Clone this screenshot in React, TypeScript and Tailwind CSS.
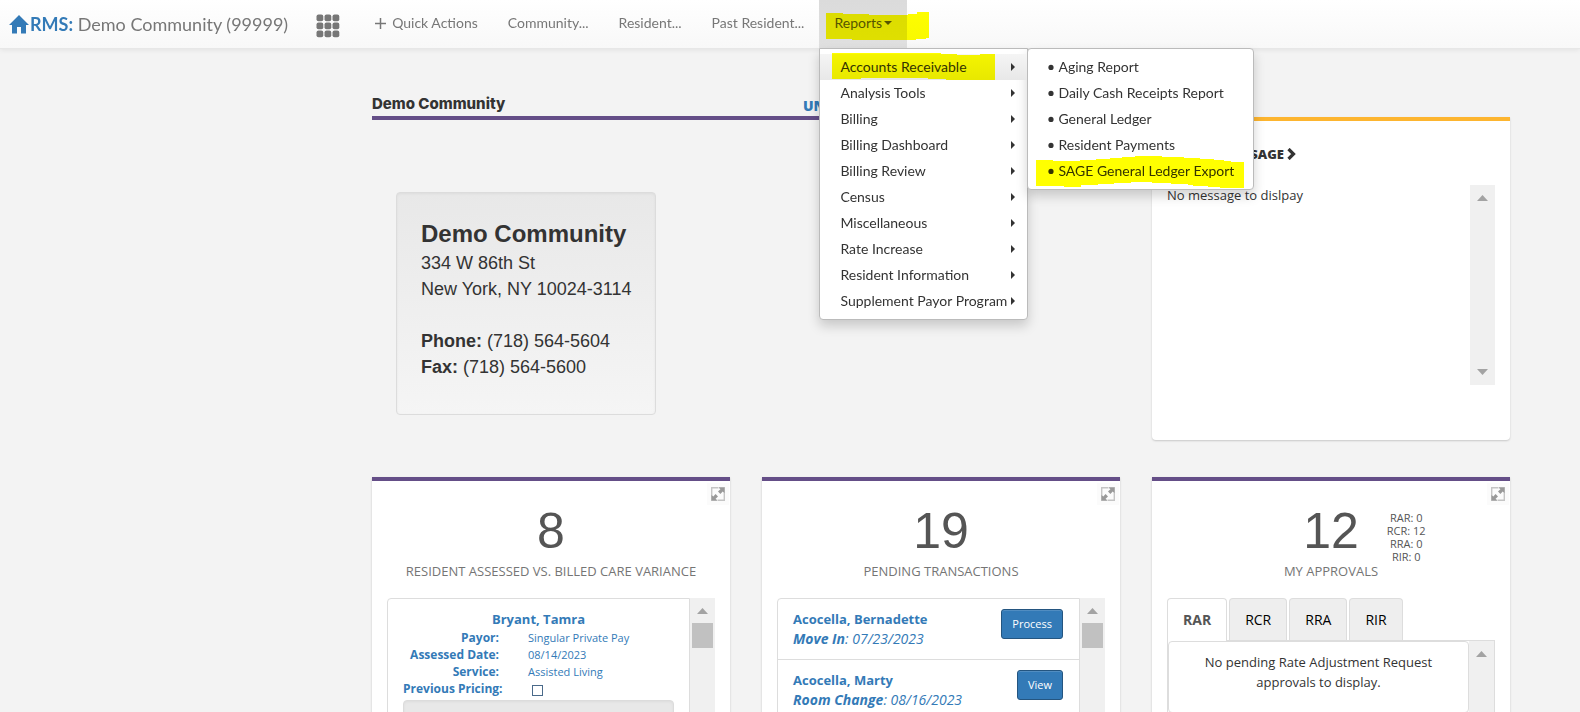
import type { ReactNode } from 'react';

const reportMenu = [
  'Accounts Receivable',
  'Analysis Tools',
  'Billing',
  'Billing Dashboard',
  'Billing Review',
  'Census',
  'Miscellaneous',
  'Rate Increase',
  'Resident Information',
  'Supplement Payor Program',
];

const receivableReports = [
  'Aging Report',
  'Daily Cash Receipts Report',
  'General Ledger',
  'Resident Payments',
  'SAGE General Ledger Export',
];

const transactions = [
  { name: 'Acocella, Bernadette', type: 'Move In', date: '07/23/2023', action: 'Process' },
  { name: 'Acocella, Marty', type: 'Room Change', date: '08/16/2023', action: 'View' },
];

const approvals = [
  { code: 'RAR', count: 0 },
  { code: 'RCR', count: 12 },
  { code: 'RRA', count: 0 },
  { code: 'RIR', count: 0 },
];

function HomeIcon() {
  return (
    <svg viewBox="0 0 20 19" className="w-5 h-[19px] shrink-0" fill="#337ab7" aria-hidden="true">
      <path d="M10 0L20 10H17V18.5H12V12H8V18.5H3V10H0Z" />
    </svg>
  );
}

function GridIcon() {
  return (
    <svg viewBox="0 0 24 24" className="size-6" fill="#777" aria-hidden="true">
      {[0, 8, 16].map((y) =>
        [0, 8, 16].map((x) => <rect key={`${x}-${y}`} x={x + 0.5} y={y + 0.5} width="6.8" height="6.8" rx="2" />)
      )}
    </svg>
  );
}

function ExpandIcon() {
  return (
    <svg viewBox="0 0 14 14" className="size-[14px]" fill="none" aria-hidden="true">
      <path d="M7.5 .7H.7V13.3H6M6.5 13.3H13.3V.7H8" stroke="#c4c4c4" strokeWidth="1.4" />
      <path d="M8 .5H13.5V6L11.7 4.6L9.4 7L7 4.6L9.4 2.3Z" fill="#999" />
      <path d="M6 13.5H.5V8L2.3 9.4L4.6 7L7 9.4L4.6 11.7Z" fill="#999" />
    </svg>
  );
}

function ScrollTrack({ thumb, down }: { thumb?: boolean; down?: boolean }) {
  return (
    <div className="w-[25px] shrink-0 bg-[#f0f0f0] flex flex-col items-center">
      <svg viewBox="0 0 11 6" className="w-[11px] h-1.5 mt-2.5 shrink-0" fill="#a3a3a3" aria-hidden="true">
        <path d="M5.5 0L11 6H0Z" />
      </svg>
      {thumb && <div className="w-[21px] h-[25px] mt-[9px] bg-[#c1c1c1]" />}
      {down && (
        <svg viewBox="0 0 11 6" className="w-[11px] h-1.5 mt-auto mb-2.5 shrink-0" fill="#a3a3a3" aria-hidden="true">
          <path d="M5.5 6L11 0H0Z" />
        </svg>
      )}
    </div>
  );
}

function Marker({ className, viewBox, d }: { className: string; viewBox: string; d: string }) {
  return (
    <svg viewBox={viewBox} className={`absolute mix-blend-multiply pointer-events-none ${className}`} aria-hidden="true">
      <path d={d} fill="#ff0" />
    </svg>
  );
}

function StatCard({ count, label, side, children }: { count: number; label: string; side?: ReactNode; children: ReactNode }) {
  return (
    <section className="relative bg-white border-t-4 border-[#644e87] shadow-[0_1px_2px_rgba(0,0,0,0.18)] px-[15px] h-[300px]">
      <button type="button" aria-label="Expand" className="absolute top-0.5 right-px p-1 bg-[#fbfbfb]">
        <ExpandIcon />
      </button>
      <div className="grid grid-cols-[1fr_auto_1fr] h-[78px] pt-6">
        <span />
        <span className="font-['Liberation_Sans',sans-serif] text-[50px] leading-[52px] text-[#555]">{count}</span>
        <div className="pl-7 pt-1.5">{side}</div>
      </div>
      <h2 className="text-center text-[13px] leading-5 mt-0.5 font-medium text-[#757575]">{label}</h2>
      <div className="mt-[17px]">{children}</div>
    </section>
  );
}

function NavBar() {
  return (
    <header className="relative z-10 flex h-[49px] bg-linear-to-b from-white to-[#f8f8f8] border-b border-[#e7e7e7] shadow-[0_1px_5px_rgba(0,0,0,0.075)] font-[Lato,sans-serif] text-sm leading-5 text-[#777]">
      <a href="#" className="flex items-center pl-[9px] gap-px text-lg">
        <HomeIcon />
        <span>
          <b className="text-[#337ab7]">RMS:</b> Demo Community (99999)
        </span>
      </a>
      <button type="button" aria-label="Apps" className="pl-7 pt-1 pr-5">
        <GridIcon />
      </button>
      <nav className="flex">
        <a href="#" className="flex items-center gap-1.5 px-[15px] pb-0.5">
          <svg viewBox="0 0 11 11" className="size-[11px]" stroke="#777" strokeWidth="1.5" aria-hidden="true">
            <path d="M5.5 0V11M0 5.5H11" />
          </svg>
          Quick Actions
        </a>
        <a href="#" className="flex items-center px-[15px] pb-0.5">Community...</a>
        <a href="#" className="flex items-center px-[15px] pb-0.5">Resident...</a>
        <a href="#" className="flex items-center px-[15px] pb-0.5">Past Resident...</a>
        <div className="relative flex">
          <a
            href="#"
            aria-expanded="true"
            className="flex items-center gap-0.5 px-[15px] pb-0.5 text-[#555] bg-linear-to-b from-[#dbdbdb] to-[#e0e0e0]"
          >
            Reports
            <svg viewBox="0 0 8 4" className="w-2 h-1" fill="#555" aria-hidden="true">
              <path d="M0 0H8L4 4Z" />
            </svg>
          </a>
          <Marker
            className="left-[7px] top-3 w-[103px] h-7"
            viewBox="0 0 103 28"
            d="M0 1H17V2H43V3H82V2H91V0H103V26H100V27H90V28H26V27H0Z"
          />
          <ReportMenu />
        </div>
      </nav>
    </header>
  );
}

function ReportMenu() {
  return (
    <div className="absolute left-0 top-12 flex items-start text-[#333] whitespace-nowrap">
      <ul className="w-[209px] py-[5px] bg-white border border-[#bbb] rounded-b shadow-[0_6px_12px_rgba(0,0,0,0.175)]">
        {reportMenu.map((item, i) => (
          <li key={item} className={`relative ${i === 0 ? 'bg-linear-to-b from-[#f5f5f5] to-[#e8e8e8]' : ''}`}>
            <a href="#" className="flex items-center justify-between pl-5 pr-3 py-[3px]">
              {item}
              <svg viewBox="0 0 4 8" className="w-1 h-2" fill="#333" aria-hidden="true">
                <path d="M0 0L4 4L0 8Z" />
              </svg>
            </a>
            {i === 0 && (
              <Marker
                className="left-3 -top-px w-[163px] h-[27px]"
                viewBox="0 0 163 27"
                d="M0 0H109V1H125V2H148V1H163V27H114V26H96V25H29V26H0Z"
              />
            )}
          </li>
        ))}
      </ul>
      <ul className="w-[227px] -ml-px py-[5px] bg-white border border-[#bbb] rounded shadow-[0_6px_12px_rgba(0,0,0,0.175)]">
        {receivableReports.map((item) => (
          <li key={item} className="relative">
            <a href="#" className="flex items-center gap-1 pl-5 py-[3px]">
              <svg viewBox="0 0 6 6" className="size-1.5" fill="#333" aria-hidden="true">
                <circle cx="3" cy="3.4" r="2.6" />
              </svg>
              {item}
            </a>
            {item === 'SAGE General Ledger Export' && (
              <Marker
                className="left-2 -top-0.5 w-[208px] h-8"
                viewBox="0 0 208 32"
                d="M0 4H17V5H44V4H60V3H74V2H86V1H99V0H126V1H148V2H164V3H178V4H188V5H195V6H208V32H184V31H172V30H157V29H152V28H135V27H116V26H95V27H78V28H62V29H45V31H28V30H0Z"
              />
            )}
          </li>
        ))}
      </ul>
    </div>
  );
}

function VarianceList() {
  return (
    <div className="flex h-40">
      <div className="flex-1 border border-[#ddd] rounded-tl px-[15px] pt-2.5 text-xs leading-[17px] text-[#337ab7]">
        <a href="#" className="block text-center text-[13px] leading-5 font-bold">Bryant, Tamra</a>
        <dl className="grid grid-cols-[96px_1fr] gap-x-[29px]">
          <dt className="text-right font-bold">Payor:</dt>
          <dd className="text-[11px]">Singular Private Pay</dd>
          <dt className="text-right font-bold">Assessed Date:</dt>
          <dd className="text-[11px]">08/14/2023</dd>
          <dt className="text-right font-bold">Service:</dt>
          <dd className="text-[11px]">Assisted Living</dd>
          <dt className="text-right font-bold whitespace-nowrap">
            <label htmlFor="previous-pricing">Previous Pricing:</label>
          </dt>
          <dd className="flex items-center pl-1 pt-1">
            <input
              id="previous-pricing"
              type="checkbox"
              className="appearance-none size-[11px] border border-[#4a6a8a] bg-white checked:bg-[#337ab7]"
            />
          </dd>
        </dl>
        <div className="h-12 mt-[3px] rounded border border-[#dcdcdc] bg-[#e8e8e8] shadow-[inset_0_1px_3px_rgba(0,0,0,0.05)]" />
      </div>
      <ScrollTrack thumb />
    </div>
  );
}

function TransactionList() {
  return (
    <div className="flex h-40">
      <ul className="flex-1 border border-[#ddd] rounded-tl text-sm leading-5 text-[#337ab7]">
        {transactions.map((t) => (
          <li key={t.name} className="flex items-start justify-between h-[61px] pt-2.5 pl-[15px] pr-4 border-b border-[#ddd]">
            <a href="#">
              <b className="block text-[13px] leading-5">{t.name}</b>
              <i>
                <b>{t.type}</b>: {t.date}
              </i>
            </a>
            <button
              type="button"
              className="h-[30px] px-2.5 rounded-[3px] border border-[#245580] bg-[#337ab7] text-[11px] font-medium text-white shadow-[inset_0_1px_0_rgba(255,255,255,0.15)]"
            >
              {t.action}
            </button>
          </li>
        ))}
      </ul>
      <ScrollTrack thumb />
    </div>
  );
}

function ApprovalTabs() {
  return (
    <div>
      <div role="tablist" className="flex gap-0.5 text-sm leading-5">
        {approvals.map(({ code }, i) => (
          <button
            key={code}
            type="button"
            role="tab"
            aria-selected={i === 0}
            className={
              i === 0
                ? 'relative h-[43px] -mb-px px-[15px] rounded-t border border-b-0 border-[#ddd] bg-white font-bold text-[#555]'
                : 'h-[42px] px-[15px] rounded-t border border-b-0 border-[#ddd] bg-[#eee] text-black'
            }
          >
            {code}
          </button>
        ))}
      </div>
      <div className="flex h-28 border border-[#ddd]">
        <div className="flex-1 border border-[#ddd] rounded h-[72px] px-6 pt-2.5 text-center text-[13px] leading-5 text-[#333]">
          No pending Rate Adjustment Request approvals to display.
        </div>
        <ScrollTrack />
      </div>
    </div>
  );
}

export default function App() {
  return (
    <div className="h-screen overflow-hidden bg-[#f3f3f3] font-['Open_Sans','Noto_Sans',sans-serif] text-[#333]">
      <NavBar />
      <main className="pl-[372px] pr-[70px] pt-[45px]">
        <div className="grid grid-cols-3 gap-x-8 gap-y-[37px]">
          {/* Community summary */}
          <section className="col-span-2">
            <div className="flex items-end h-5 pb-0.5 border-b-4 border-[#644e87] box-content">
              <h1 className="flex-1 font-[Inter,sans-serif] text-[15px] leading-5 font-extrabold">Demo Community</h1>
              <a href="#" className="w-[317px] text-sm leading-4 font-extrabold text-[#337ab7]">UN</a>
            </div>
            <address className="not-italic w-fit mt-[72px] ml-6 px-6 pt-[25px] pb-[34px] rounded border border-[#dcdcdc] bg-linear-to-b from-[#e8e8e8] to-[#f5f5f5] shadow-[inset_0_1px_3px_rgba(0,0,0,0.05)] font-['Liberation_Sans',sans-serif] text-lg leading-[26px]">
              <strong className="block text-2xl leading-8">Demo Community</strong>
              334 W 86th St
              <br />
              New York, NY 10024-3114
              <br />
              <br />
              <strong>Phone:</strong> (718) 564-5604
              <br />
              <strong>Fax:</strong> (718) 564-5600
            </address>
          </section>

          {/* Message */}
          <section className="mt-[23px] h-[323px] bg-white rounded-b border-t-4 border-[#fdb52f] shadow-[0_1px_2px_rgba(0,0,0,0.18)] px-[15px] pt-[23px]">
            <h2 className="w-[129px] flex items-center justify-end gap-[3px] text-[13px] leading-5 font-extrabold">
              MESSAGE
              <svg viewBox="0 0 9 12" className="w-[9px] h-3" fill="none" stroke="#333" strokeWidth="3.2" aria-hidden="true">
                <path d="M1.5 1L6.5 6L1.5 11" />
              </svg>
            </h2>
            <div className="flex justify-between h-[200px] mt-[21px]">
              <p className="text-[13px] leading-5">No message to dislpay</p>
              <ScrollTrack down />
            </div>
          </section>

          <StatCard count={8} label="RESIDENT ASSESSED VS. BILLED CARE VARIANCE">
            <VarianceList />
          </StatCard>
          <StatCard count={19} label="PENDING TRANSACTIONS">
            <TransactionList />
          </StatCard>
          <StatCard
            count={12}
            label="MY APPROVALS"
            side={
              <ul className="w-fit text-center text-[11px] leading-[13px] text-[#555]">
                {approvals.map((a) => (
                  <li key={a.code}>
                    {a.code}: {a.count}
                  </li>
                ))}
              </ul>
            }
          >
            <ApprovalTabs />
          </StatCard>
        </div>
      </main>
    </div>
  );
}
